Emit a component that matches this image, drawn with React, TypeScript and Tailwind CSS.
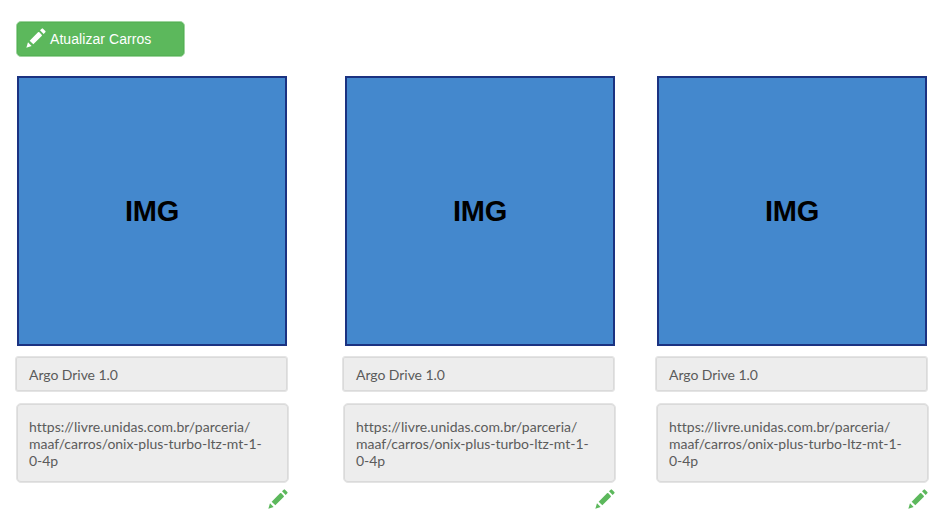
type CarCard = { name: string; url: string[]; column: string; image: string };

const url = ['https://livre.unidas.com.br/parceria/', 'maaf/carros/onix-plus-turbo-ltz-mt-1-', '0-4p'];

const cars: CarCard[] = [
  { name: 'Argo Drive 1.0', url, column: 'ml-[15px]', image: 'ml-[2px]' },
  { name: 'Argo Drive 1.0', url, column: 'ml-[53px]', image: 'ml-[3px]' },
  { name: 'Argo Drive 1.0', url, column: 'ml-[39px]', image: 'ml-[2px]' },
];

function Pencil({ className }: { className: string }) {
  return (
    <svg viewBox="0 0 60 60" className={className} fill="currentColor" aria-hidden="true">
      <path d="M1 59 6 43 17 54Z" />
      <path d="M11 38 36 13Q38 11 40 13L47 20Q49 22 47 24L22 49Z" />
      <path d="M42 7 47 2Q49 0 51 2L58 9Q60 11 58 13L53 18Z" />
    </svg>
  );
}

function Card({ car }: { car: CarCard }) {
  return (
    <article className={`flex w-[274px] shrink-0 flex-col ${car.column}`}>
      <div
        className={`flex h-[270px] w-[270px] items-center justify-center border-2 border-[#1b3281] bg-[#4488cd] text-[29px] leading-none font-bold tracking-[-0.3px] text-black ${car.image}`}
      >
        IMG
      </div>
      <div className="mt-[10px] flex h-9 w-[273px] items-center rounded-[3px] border border-[#e4e4e4] bg-[#ededed] pl-[13px] font-['Lato',sans-serif] text-[14px] tracking-[-0.05px] text-[#5b5b5b] shadow-[inset_0_0_0_1px_#dadada]">
        <span className="pt-px">{car.name}</span>
      </div>
      <div className="mt-[11px] ml-px h-[80px] w-[273px] rounded-[5px] border border-[#e4e4e4] bg-[#ededed] pt-[14px] pl-[12px] font-['Lato',sans-serif] text-[14px] leading-[17px] tracking-[-0.025px] whitespace-nowrap text-[#5b5b5b] shadow-[inset_0_0_0_1px_#dadada] [font-variant-ligatures:none]">
        {car.url.map((line) => (
          <div key={line} className="first:tracking-[0.035px]">
            {line}
          </div>
        ))}
      </div>
      <Pencil className="mt-[6px] mr-px h-5 w-5 self-end text-[#5cb85c]" />
    </article>
  );
}

export default function App() {
  return (
    <main className="h-[528px] w-[952px] overflow-hidden bg-white pt-[21px] font-['Liberation_Sans',Arial,sans-serif]">
      <button className="ml-4 flex h-9 w-[169px] items-center rounded-[5px] border border-[#9ed49e] bg-[#5cb85c] pl-[9px] text-[14px] text-white shadow-[inset_0_0_0_1px_#55b155]">
        <Pencil className="-mt-[3px] h-5 w-5" />
        <span className="ml-[4px] tracking-[0.06px]">Atualizar Carros</span>
      </button>
      <section className="mt-[19px] flex">
        {cars.map((car, index) => (
          <Card key={index} car={car} />
        ))}
      </section>
    </main>
  );
}
